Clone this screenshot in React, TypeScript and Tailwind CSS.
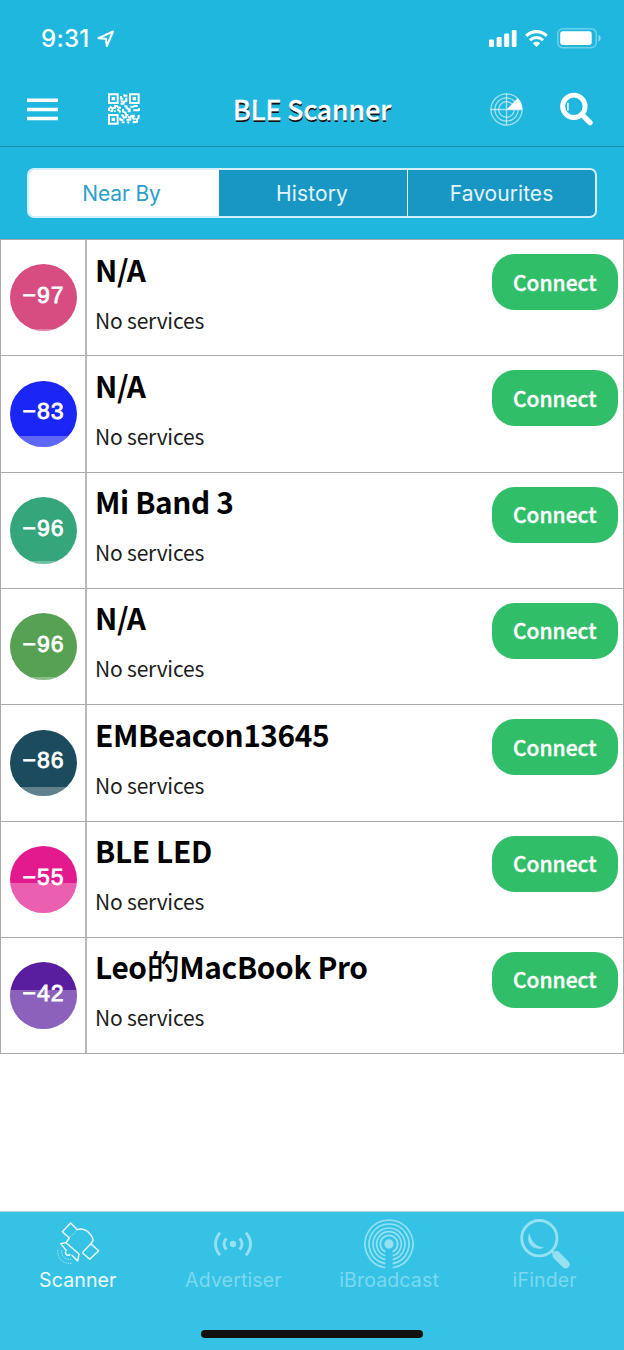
import { useState } from "react";
import type { ReactNode } from "react";
import clsx from "clsx";

interface Device {
  name: string;
  rssi: number;
  color: string;
}

const DEVICES: Device[] = [
  { name: "N/A", rssi: -97, color: "bg-[#d74d82]" },
  { name: "N/A", rssi: -83, color: "bg-[#1a26f5]" },
  { name: "Mi Band 3", rssi: -96, color: "bg-[#35a57b]" },
  { name: "N/A", rssi: -96, color: "bg-[#56a153]" },
  { name: "EMBeacon13645", rssi: -86, color: "bg-[#1b4b5d]" },
  { name: "BLE LED", rssi: -55, color: "bg-[#e21a8e]" },
  { name: "Leo的MacBook Pro", rssi: -42, color: "bg-[#591d9f]" },
];

const SEGMENTS = [
  { label: "Near By", style: "pr-[3px] tracking-[-0.15px]" },
  { label: "History", style: "tracking-[0.1px]" },
  { label: "Favourites", style: "border-l-[1.5px] border-[#e0f5fb] tracking-[0.05px]" },
];

const TABS: { label: string; icon: ReactNode }[] = [
  { label: "Scanner", icon: <SatelliteIcon /> },
  { label: "Advertiser", icon: <AdvertiserIcon /> },
  { label: "iBroadcast", icon: <BroadcastIcon /> },
  { label: "iFinder", icon: <FinderIcon /> },
];

export default function App() {
  const [segment, setSegment] = useState("Near By");
  const [tab, setTab] = useState("Scanner");

  return (
    <div className="flex h-[1350px] w-[624px] flex-col overflow-hidden bg-white font-['Noto_Sans_CJK_SC',sans-serif]">
      <header className="h-[239px] shrink-0 bg-[#20b7df] text-white">
        <StatusBar />
        <NavBar />
        <div className="px-[27px] pt-[21px]">
          <div className="grid h-[50px] grid-cols-[188px_190px_1fr] overflow-hidden rounded-[7px] border-2 border-[#d3f0f8] bg-[#1897c5] font-[Inter,sans-serif]">
            {SEGMENTS.map((s) => (
              <button
                key={s.label}
                onClick={() => setSegment(s.label)}
                className={clsx(
                  "text-[21px] leading-none",
                  s.style,
                  s.label === segment
                    ? "bg-white text-[#2a9fc9] shadow-[0_0_0_2px_#fff]"
                    : "text-[#e3f5fb]",
                )}
              >
                {s.label}
              </button>
            ))}
          </div>
        </div>
      </header>

      <main className="flex-1">
        <ul className="border-t border-l border-[#a9a9a9]">
          {DEVICES.map((d, i) => (
            <DeviceRow key={i} device={d} />
          ))}
        </ul>
      </main>

      <footer className="flex h-[139px] shrink-0 flex-col items-center border-t border-[#b5d5de] bg-[#36c2e5] font-[Inter,sans-serif]">
        <nav className="grid w-full grid-cols-4 pt-[7px] pr-[1.5px]">
          {TABS.map((t) => (
            <button
              key={t.label}
              onClick={() => setTab(t.label)}
              className={clsx(
                "flex flex-col items-center",
                t.label === tab ? "text-[#effbfe]" : "text-[#95e1f2]",
              )}
            >
              {t.icon}
              <span
                className={clsx(
                  "text-[19.5px] leading-[22px] tracking-[0.15px]",
                  t.label !== tab && "text-[#7bd9ee]",
                )}
              >
                {t.label}
              </span>
            </button>
          ))}
        </nav>
        <div className="mt-[39px] h-2 w-[222px] rounded-full bg-[#111]" />
      </footer>
    </div>
  );
}

function StatusBar() {
  return (
    <div className="flex h-[72px] items-center justify-between pt-[5px] pr-[23px] pl-[41px]">
      <div className="flex items-center gap-[7px]">
        <span className="font-[Inter,sans-serif] text-[24px] leading-none font-medium tracking-[0.3px]">
          9:31
        </span>
        <svg viewBox="0 0 18 18" className="size-[18px]" fill="none" stroke="currentColor">
          <path d="M1.5 8.2 16 1.5 9.8 16 9 8.8Z" strokeWidth="2" strokeLinejoin="round" />
        </svg>
      </div>
      <div className="flex items-center">
        <svg viewBox="0 0 28 17" className="h-[17px] w-7" fill="currentColor">
          <rect x="0" y="9.5" width="5" height="7.5" rx="1.2" />
          <rect x="7.6" y="7" width="5" height="10" rx="1.2" />
          <rect x="15.2" y="3.5" width="5" height="13.5" rx="1.2" />
          <rect x="22.8" y="0" width="4.7" height="17" rx="1.2" />
        </svg>
        <svg viewBox="0 0 23 17" className="ml-2 h-[17px] w-[23px]" fill="none" stroke="currentColor">
          <path d="M1.3 5.9a14.4 14.4 0 0 1 20.4 0" strokeWidth="3.3" />
          <path d="M5 10.2a9.3 9.3 0 0 1 13 0" strokeWidth="3" />
          <path d="M11.5 17 7.9 13.3a5.2 5.2 0 0 1 7.2 0Z" fill="currentColor" stroke="none" />
        </svg>
        <svg viewBox="0 0 44 21" className="ml-[9px] h-[21px] w-11" fill="none">
          <rect x="0.8" y="0.8" width="38.5" height="19" rx="5" stroke="#fff" strokeOpacity="0.35" strokeWidth="1.5" />
          <rect x="3.2" y="3.3" width="31.5" height="13.6" rx="2.6" fill="#fff" />
          <path d="M41.5 7v6.5c2.8-1.2 2.8-5.3 0-6.5Z" fill="#fff" fillOpacity="0.5" />
        </svg>
      </div>
    </div>
  );
}

function NavBar() {
  return (
    <div className="grid h-[75px] grid-cols-[206px_1fr_206px] items-center border-b border-[#1b8fb0]">
      <div className="flex items-center pl-[27px]">
        <svg viewBox="0 0 31 23" className="h-[23px] w-[31px]" fill="currentColor">
          <path d="M0 .5h31v3.6H0ZM0 9.7h31v3.6H0ZM0 18.7h31v3.6H0Z" />
        </svg>
        <QrIcon />
      </div>
      <h1 className="text-center text-[26.5px] leading-none font-medium whitespace-nowrap [-webkit-text-stroke:0.4px_#fff] [text-shadow:0.5px_2px_0_#111]">
        BLE Scanner
      </h1>
      <div className="flex items-center pl-[72px]">
        <RadarIcon />
        <svg viewBox="744 276 100 102" className="ml-[37px] h-[34px] w-[33px]" fill="none" stroke="currentColor">
          <circle cx="786" cy="319" r="34" strokeWidth="15" />
          <path d="m813 346 22 22" strokeWidth="16" strokeLinecap="round" />
          <path d="M768 308v24" strokeWidth="4.5" />
        </svg>
      </div>
    </div>
  );
}

function DeviceRow({ device }: { device: Device }) {
  return (
    <li className="flex h-[116.33px] border-r border-b border-[#a9a9a9]">
      <div className="flex w-[86px] shrink-0 items-center justify-center border-r-2 border-[#b8b8b8] pl-[0.6px]">
        <div
          className={clsx(
            "relative flex size-[66.6px] items-center justify-center overflow-hidden rounded-full",
            device.color,
          )}
        >
          <div
            className="absolute inset-x-0 bottom-0 bg-white/30"
            style={{ height: `${100 + device.rssi}%` }}
          />
          <span className="relative font-['Liberation_Mono',monospace] text-[23px] leading-none text-white [-webkit-text-stroke:0.8px_#fff]">
            −{Math.abs(device.rssi)}
          </span>
        </div>
      </div>
      <div className="min-w-0 flex-1 pt-[11.5px] pl-2 text-black">
        <h2 className="h-[34px] text-[29.8px] leading-[34px] font-bold tracking-[-0.37px] whitespace-nowrap">
          <DeviceName name={device.name} />
        </h2>
        <p className="mt-5 text-[21px] leading-[28px] tracking-[-0.2px] text-[#1c1c1c]">
          No services
        </p>
      </div>
      <button className="mt-[14px] mr-[5px] h-14 w-[126.5px] rounded-[23px] bg-[#30be68] text-[21px] leading-none font-medium text-white [-webkit-text-stroke:0.4px_#fff]">
        Connect
      </button>
    </li>
  );
}

// Han characters are set a little larger and lighter than the Latin around them.
function DeviceName({ name }: { name: string }) {
  return name.split(/(\p{Script=Han}+)/u).map((part, i) =>
    i % 2 === 1 ? (
      <span key={i} className="text-[33px] leading-none font-medium">
        {part}
      </span>
    ) : (
      part
    ),
  );
}

function QrIcon() {
  return (
    <svg viewBox="325 280 96 94" className="ml-[50px] h-[32px] w-8" fill="none" stroke="currentColor">
      <path d="M328 283h26v26h-26ZM391 283h26v26h-26ZM328 345h26v26h-26Z" strokeWidth="6" />
      <path d="M336 291h10v10h-10ZM399 291h10v10h-10ZM336 353h10v10h-10Z" fill="currentColor" stroke="none" />
      <path
        d="M374 283v4h9M364 288v8h7M380 293v10l-8 2v6h-9M363 304h6M328 333v-7l8-6M332 333h6v-8l8-2v-5h6l4 5h8M344 333h4M353 328l7 5 1 5M374 319h7v6l6 2v7h6M370 327v8l8 3v6M392 320h10l2-2h10M388 328h5M401 331h17v-7M415 331h-12M365 345l5 2 2 6 8-2v-6h6M362 353v6l9 1M385 352h8l2-5h11M380 359h12v-4M399 349l2 7h7M417 345v8l-5 5v8h-8M366 367h9M384 364l4 6M402 370v-8"
        strokeWidth="6"
        strokeLinejoin="round"
      />
    </svg>
  );
}

function RadarIcon() {
  return (
    <svg viewBox="0 0 33 33" className="size-[33px]" fill="none" stroke="currentColor">
      <g strokeOpacity="0.6" strokeWidth="1.2">
        <circle cx="16.5" cy="16.5" r="15.6" />
        <circle cx="16.5" cy="16.5" r="11.6" />
        <circle cx="16.5" cy="16.5" r="7.8" />
        <path d="M16.5.5v32M.5 16.5h32" strokeWidth="1.3" />
      </g>
      <path d="M16.5 16.5 27.7 5.2a16 16 0 0 1 4.5 11.3Z" fill="currentColor" stroke="none" />
    </svg>
  );
}

function SatelliteIcon() {
  return (
    <svg viewBox="159 56 150 150" className="size-[50px]" fill="none" stroke="currentColor">
      <g strokeWidth="4.2" strokeLinejoin="round">
        <path d="m208 113-21-19 25-26 21 21" />
        <path d="M233 88c12-5 20-2 29 5 12 11 18 20 17 29l-7 9-24 25" />
        <path d="m273 131 23 20-27 26-22-20" />
        <path d="m208 113-10 14-16 3 18 22M215 164l18 18 4-21-39-34" />
        <path d="M198 153c-6 8 7 17 13 8" />
      </g>
      <g strokeWidth="3" strokeDasharray="4 3" strokeOpacity="0.6">
        <path d="M233 88l-25 25M273 131l-27 26" />
        <path d="M185 150c-2 18 10 29 29 27M174 148c-3 27 14 43 41 41" />
      </g>
    </svg>
  );
}

function AdvertiserIcon() {
  return (
    <svg viewBox="626 56 150 150" className="size-[50px]" fill="none" stroke="currentColor">
      <circle cx="701" cy="131" r="9.5" fill="currentColor" stroke="none" />
      <g strokeWidth="8.5">
        <path d="M681 114q-14 17 0 34M721 114q14 17 0 34" />
        <path d="M662 97q-27 34 0 68M740 97q27 34 0 68" />
      </g>
    </svg>
  );
}

function BroadcastIcon() {
  return (
    <svg viewBox="0 0 150 150" className="size-[50px]" fill="none" stroke="currentColor">
      <circle cx="75" cy="75" r="14" fill="currentColor" stroke="none" />
      {/* rings stay open at the bottom, where the mast would stand */}
      <g strokeWidth="5">
        <path d="M64 98.6a26 26 0 1 1 22 0" />
        <path d="M64 110.3a37 37 0 1 1 22 0" />
        <path d="M64 121.7a48 48 0 1 1 22 0" />
        <path d="M64 134a60 60 0 1 1 22 0" />
        <path d="M64 146.2a72 72 0 1 1 22 0" />
      </g>
    </svg>
  );
}

function FinderIcon() {
  return (
    <svg viewBox="626 56 150 150" className="size-[50px]" fill="none" stroke="currentColor">
      <circle cx="684" cy="113.5" r="53" strokeWidth="8.5" />
      <path d="m719 150 8 8" strokeWidth="8" />
      <path d="m736 165 27 27" strokeWidth="24" strokeLinecap="round" />
      <path d="M654 99c-12 28 10 54 43 43-21-2-38-16-43-43Z" fill="currentColor" strokeWidth="1" />
    </svg>
  );
}
